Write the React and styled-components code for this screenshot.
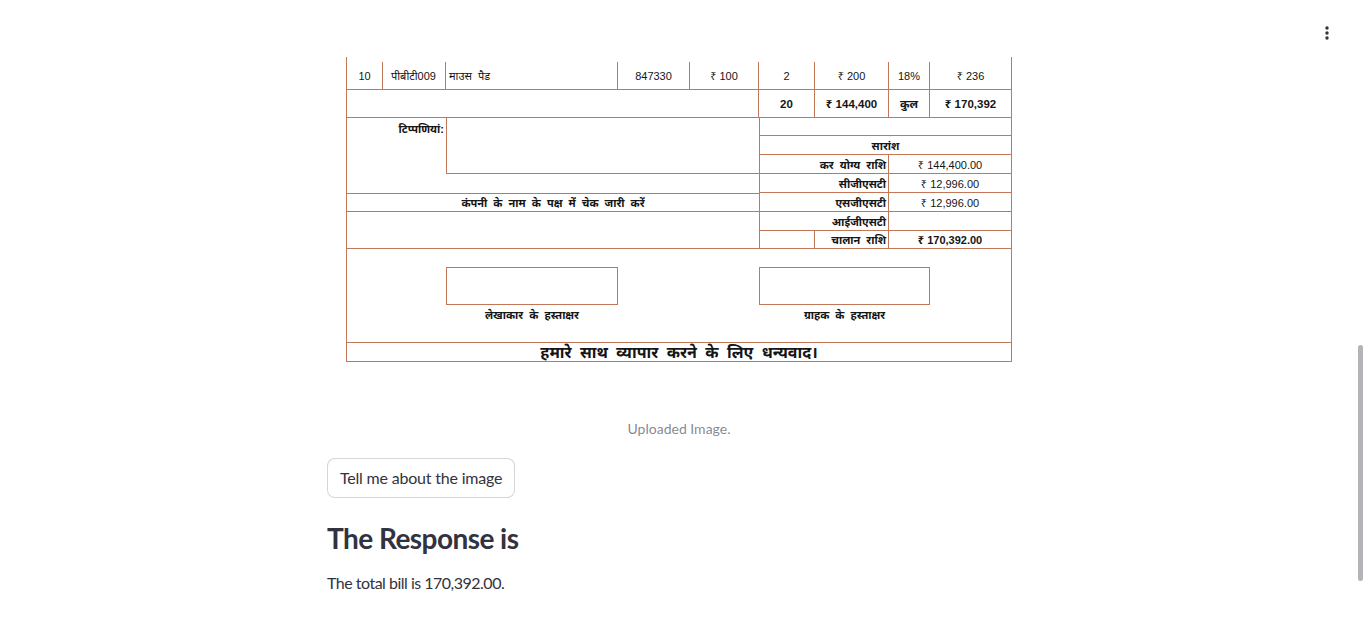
import React from 'react';
import styled, { createGlobalStyle } from 'styled-components';

const GlobalStyle = createGlobalStyle`
  html, body {
    margin: 0;
    padding: 0;
    background: #ffffff;
    overflow: hidden;
  }
  body {
    font-family: "Source Sans Pro", Lato, "Liberation Sans", sans-serif;
    color: #31333f;
  }
`;

const COLS = '36px 63px 172px 72px 69px 56px 74px 41px 81px';
const LINE = '#c27758';

export default function App() {
  return (
    <Page>
      <GlobalStyle />
      <Header>
        <MenuButton aria-label="menu">
          <svg width="4" height="14" viewBox="0 0 4 14">
            <circle cx="2" cy="2" r="1.7" fill="#31333f" />
            <circle cx="2" cy="7" r="1.7" fill="#31333f" />
            <circle cx="2" cy="12" r="1.7" fill="#31333f" />
          </svg>
        </MenuButton>
      </Header>

      <Main>
        <Invoice>
          <ItemRow>
            <Cell $r>10</Cell>
            <Cell $r $align="left">पीबीटी009</Cell>
            <Cell $r $align="left" $pad="3px" $hindi>माउस पैड</Cell>
            <Cell $r>847330</Cell>
            <Cell $r>₹ 100</Cell>
            <Cell $r>2</Cell>
            <Cell $r>₹ 200</Cell>
            <Cell $r>18%</Cell>
            <Cell>₹ 236</Cell>
          </ItemRow>

          <TotalRow>
            <Cell $col="1 / 6" $r />
            <Cell $r $bold>20</Cell>
            <Cell $r $bold>₹ 144,400</Cell>
            <Cell $r $bold>कुल</Cell>
            <Cell $bold>₹ 170,392</Cell>
          </TotalRow>

          <Summary>
            <Cell $col="1 / 3" $row="1 / 5" $align="right" $valign="start" $bold>टिप्पणियां:</Cell>
            <Cell $col="3 / 6" $row="1 / 4" $l $b />
            <Cell $col="1 / 6" $row="5" $t $b $bold $hindi>कंपनी के नाम के पक्ष में चेक जारी करें</Cell>

            <Cell $col="6 / 10" $row="1" $l $b />
            <Cell $col="6 / 10" $row="2" $l $b $bold>सारांश</Cell>
            <Cell $col="6 / 8" $row="3" $l $r $b $bold $hindi $align="right">कर योग्य राशि</Cell>
            <Cell $col="8 / 10" $row="3" $b>₹ 144,400.00</Cell>
            <Cell $col="6 / 8" $row="4" $l $r $b $bold $align="right">सीजीएसटी</Cell>
            <Cell $col="8 / 10" $row="4" $b>₹ 12,996.00</Cell>
            <Cell $col="6 / 8" $row="5" $l $r $b $bold $align="right">एसजीएसटी</Cell>
            <Cell $col="8 / 10" $row="5" $b>₹ 12,996.00</Cell>
            <Cell $col="6 / 8" $row="6" $l $r $b $bold $align="right">आईजीएसटी</Cell>
            <Cell $col="8 / 10" $row="6" $b />
            <Cell $col="6" $row="7" $l $r />
            <Cell $col="7" $row="7" $r $bold $hindi $align="right">चालान राशि</Cell>
            <Cell $col="8 / 10" $row="7" $bold>₹ 170,392.00</Cell>
          </Summary>

          <Signatures>
            <SignBox $col="3" />
            <SignLabel $col="3">लेखाकार के हस्ताक्षर</SignLabel>
            <SignBox $col="6 / 9" />
            <SignLabel $col="6 / 9">ग्राहक के हस्ताक्षर</SignLabel>
          </Signatures>

          <ThanksRow>हमारे साथ व्यापार करने के लिए धन्यवाद।</ThanksRow>
        </Invoice>

        <Caption>Uploaded Image.</Caption>

        <Content>
          <Button type="button">Tell me about the image</Button>
          <Heading>The Response is</Heading>
          <Paragraph>The total bill is 170,392.00.</Paragraph>
        </Content>
      </Main>

      <ScrollThumb />
    </Page>
  );
}

const Page = styled.div`
  position: relative;
  width: 1364px;
  height: 627px;
  overflow: hidden;
  background: #ffffff;
`;

const Header = styled.header`
  height: 57px;
  display: flex;
  justify-content: flex-end;
  align-items: flex-start;
  padding: 26px 35px 0 0;
  box-sizing: border-box;
`;

const MenuButton = styled.button`
  display: flex;
  background: none;
  border: none;
  padding: 0;
  cursor: pointer;
`;

const Main = styled.main`
  width: 710px;
  box-sizing: border-box;
  margin: 0 auto;
  padding-right: 6px;
  display: flex;
  flex-direction: column;
  align-items: center;
`;

const Invoice = styled.div`
  width: 666px;
  border-left: 1px solid ${LINE};
  border-right: 1px solid ${LINE};
  border-bottom: 1px solid ${LINE};
  box-sizing: border-box;
  font-family: "Liberation Sans", Arial, "Noto Sans", sans-serif;
  font-size: 11px;
  color: #151515;
`;

const ItemRow = styled.div`
  display: grid;
  grid-template-columns: ${COLS};
  height: 33px;
  padding-top: 5px;
  box-sizing: border-box;
  border-bottom: 1px solid ${LINE};
`;

const TotalRow = styled.div`
  display: grid;
  grid-template-columns: ${COLS};
  height: 27px;
  border-bottom: 1px solid ${LINE};
  font-size: 11.5px;
`;

const Summary = styled.div`
  display: grid;
  grid-template-columns: ${COLS};
  grid-template-rows: 18px 19px 19px 19px 19px 19px 17px;
  border-bottom: 1px solid ${LINE};
`;

const Cell = styled.div`
  grid-column: ${p => p.$col || 'auto'};
  grid-row: ${p => p.$row || 'auto'};
  display: flex;
  align-items: ${p => p.$valign || 'center'};
  justify-content: ${p => (p.$align === 'left' ? 'flex-start' : p.$align === 'right' ? 'flex-end' : 'center')};
  padding: ${p => (p.$valign ? '3px' : '0')} ${p => p.$pad || '2px'} 0 ${p => p.$pad || (p.$align === 'left' ? '8px' : '2px')};
  font-weight: ${p => (p.$bold ? 700 : 400)};
  word-spacing: ${p => (p.$hindi ? '3px' : 'normal')};
  white-space: nowrap;
  box-sizing: border-box;
  border-right: ${p => (p.$r ? `1px solid ${LINE}` : 'none')};
  border-left: ${p => (p.$l ? `1px solid ${LINE}` : 'none')};
  border-bottom: ${p => (p.$b ? `1px solid ${LINE}` : 'none')};
  border-top: ${p => (p.$t ? `1px solid ${LINE}` : 'none')};
`;

const Signatures = styled.div`
  display: grid;
  grid-template-columns: ${COLS};
  grid-template-rows: 38px 20px;
  padding-top: 18px;
  height: 94px;
  box-sizing: border-box;
  border-bottom: 1px solid ${LINE};
`;

const SignBox = styled.div`
  grid-column: ${p => p.$col};
  grid-row: 1;
  border: 1px solid ${LINE};
`;

const SignLabel = styled.div`
  grid-column: ${p => p.$col};
  grid-row: 2;
  text-align: center;
  font-weight: 700;
  font-size: 11px;
  word-spacing: 3px;
  padding-top: 2px;
`;

const ThanksRow = styled.div`
  height: 18px;
  display: flex;
  align-items: center;
  justify-content: center;
  font-weight: 700;
  font-size: 16px;
  word-spacing: 4px;
`;

const Caption = styled.div`
  margin-top: 56px;
  font-size: 14px;
  line-height: 21px;
  color: rgba(49, 51, 63, 0.6);
`;

const Content = styled.div`
  align-self: stretch;
  display: flex;
  flex-direction: column;
  align-items: flex-start;
`;

const Button = styled.button`
  margin-top: 19px;
  height: 40px;
  padding: 0 12px 2px;
  border: 1px solid rgba(49, 51, 63, 0.2);
  border-radius: 8px;
  background: #ffffff;
  color: #31333f;
  font-family: inherit;
  font-size: 16px;
  letter-spacing: -0.2px;
  cursor: pointer;
`;

const Heading = styled.h3`
  margin: 23px 0 0;
  font-size: 28px;
  line-height: 34px;
  font-weight: 700;
  color: #31333f;
  letter-spacing: -0.55px;
`;

const Paragraph = styled.p`
  margin: 16px 0 0;
  font-size: 16px;
  line-height: 24px;
  color: #31333f;
  letter-spacing: -0.5px;
`;

const ScrollThumb = styled.div`
  position: absolute;
  top: 345px;
  right: 1px;
  width: 5px;
  height: 236px;
  border-radius: 3px;
  background: #b4b4b8;
`;
